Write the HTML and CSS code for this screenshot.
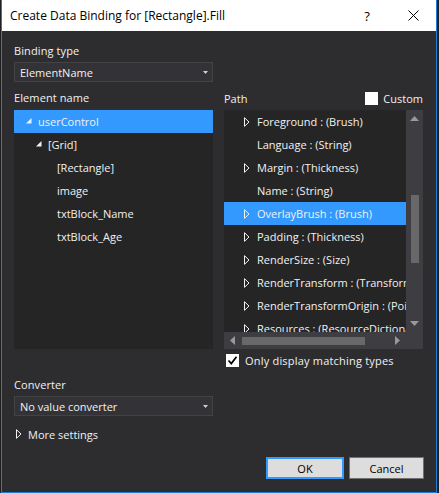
FILE: index.html
```html
<!DOCTYPE html>
<html>
<head>
<meta charset="utf-8">
<link rel="stylesheet" href="styles.css">
</head>
<body>
<div class="window">
  <div class="titlebar">
    <span class="title">Create Data Binding for [Rectangle].Fill</span>
    <span class="tbtn help">?</span>
    <span class="tbtn close"><svg width="11" height="11" viewBox="0 0 11 11"><path d="M0.5 0.5 L10.5 10.5 M10.5 0.5 L0.5 10.5" stroke="#000" stroke-width="1" fill="none"/></svg></span>
  </div>
  <div class="content">
    <div class="grid">
      <div class="label c1">Binding type</div>
      <div class="combo c1">
        <span>ElementName</span>
        <svg class="drop" width="5" height="3" viewBox="0 0 5 3"><path d="M0 0 H5 L2.5 3 Z" fill="#d0d0d0"/></svg>
      </div>
      <div class="label c1 sectlabel">Element name</div>
      <div class="pathhead c2 sectlabel">
        <span>Path</span>
        <span class="custom"><span class="box"></span>Custom</span>
      </div>
      <div class="tree c1">
        <div class="row sel lvl0"><svg class="exp" width="6" height="6" viewBox="0 0 6 6"><path d="M5.5 0 V5.5 H0 Z" fill="#f1f1f1"/></svg>userControl</div>
        <div class="row lvl1"><svg class="exp" width="6" height="6" viewBox="0 0 6 6"><path d="M5.5 0 V5.5 H0 Z" fill="#f1f1f1"/></svg>[Grid]</div>
        <div class="row lvl2">[Rectangle]</div>
        <div class="row lvl2">image</div>
        <div class="row lvl2">txtBlock_Name</div>
        <div class="row lvl2">txtBlock_Age</div>
      </div>
      <div class="pathbox c2">
        <div class="list">
          <div class="prow"><svg class="col" width="6" height="10" viewBox="0 0 6 10"><path d="M0.5 0.7 L5 5 L0.5 9.3 Z" fill="none" stroke="#f1f1f1" stroke-width="1"/></svg>Foreground : (Brush)</div>
          <div class="prow"><span class="nocol"></span>Language : (String)</div>
          <div class="prow"><svg class="col" width="6" height="10" viewBox="0 0 6 10"><path d="M0.5 0.7 L5 5 L0.5 9.3 Z" fill="none" stroke="#f1f1f1" stroke-width="1"/></svg>Margin : (Thickness)</div>
          <div class="prow"><span class="nocol"></span>Name : (String)</div>
          <div class="prow sel"><svg class="col" width="6" height="10" viewBox="0 0 6 10"><path d="M0.5 0.7 L5 5 L0.5 9.3 Z" fill="none" stroke="#f1f1f1" stroke-width="1"/></svg>OverlayBrush : (Brush)</div>
          <div class="prow"><svg class="col" width="6" height="10" viewBox="0 0 6 10"><path d="M0.5 0.7 L5 5 L0.5 9.3 Z" fill="none" stroke="#f1f1f1" stroke-width="1"/></svg>Padding : (Thickness)</div>
          <div class="prow"><svg class="col" width="6" height="10" viewBox="0 0 6 10"><path d="M0.5 0.7 L5 5 L0.5 9.3 Z" fill="none" stroke="#f1f1f1" stroke-width="1"/></svg>RenderSize : (Size)</div>
          <div class="prow"><svg class="col" width="6" height="10" viewBox="0 0 6 10"><path d="M0.5 0.7 L5 5 L0.5 9.3 Z" fill="none" stroke="#f1f1f1" stroke-width="1"/></svg>RenderTransform : (Transform)</div>
          <div class="prow"><svg class="col" width="6" height="10" viewBox="0 0 6 10"><path d="M0.5 0.7 L5 5 L0.5 9.3 Z" fill="none" stroke="#f1f1f1" stroke-width="1"/></svg>RenderTransformOrigin : (Point)</div>
          <div class="prow"><svg class="col" width="6" height="10" viewBox="0 0 6 10"><path d="M0.5 0.7 L5 5 L0.5 9.3 Z" fill="none" stroke="#f1f1f1" stroke-width="1"/></svg>Resources : (ResourceDictionary)</div>
        </div>
        <div class="vscroll">
          <div class="arrowbox"><svg width="9" height="5" viewBox="0 0 9 5"><path d="M4.5 0 L9 5 H0 Z" fill="#999"/></svg></div>
          <div class="vtrack"><div class="vthumb"></div></div>
          <div class="arrowbox"><svg width="9" height="5" viewBox="0 0 9 5"><path d="M0 0 H9 L4.5 5 Z" fill="#999"/></svg></div>
        </div>
        <div class="hscroll">
          <div class="arrowbox"><svg width="5" height="9" viewBox="0 0 5 9"><path d="M5 0 V9 L0 4.5 Z" fill="#999"/></svg></div>
          <div class="htrack"><div class="hthumb"></div></div>
          <div class="arrowbox"><svg width="5" height="9" viewBox="0 0 5 9"><path d="M0 0 L5 4.5 L0 9 Z" fill="#999"/></svg></div>
        </div>
        <div class="corner"></div>
      </div>
      <div class="only c2">
        <span class="box checked"><svg width="11" height="11" viewBox="0 0 11 11"><path d="M1.5 5.5 L4.3 8.5 L9.5 1.8" fill="none" stroke="#000" stroke-width="1.8"/></svg></span>
        <span>Only display matching types</span>
      </div>
    </div>
    <div class="label conv">Converter</div>
    <div class="combo conv-combo">
      <span>No value converter</span>
      <svg class="drop" width="5" height="3" viewBox="0 0 5 3"><path d="M0 0 H5 L2.5 3 Z" fill="#d0d0d0"/></svg>
    </div>
    <div class="more">
      <svg width="6" height="10" viewBox="0 0 6 10"><path d="M0.5 0.7 L5 5 L0.5 9.3 Z" fill="none" stroke="#f1f1f1" stroke-width="1"/></svg>
      <span>More settings</span>
    </div>
    <div class="buttons">
      <button class="btn ok">OK</button>
      <button class="btn cancel">Cancel</button>
    </div>
  </div>
</div>
</body>
</html>
```

FILE: styles.css
```css
* { box-sizing: border-box; }

body {
  margin: 0;
  background: #1f1f21;
  font-family: "Open Sans", "Noto Sans", sans-serif;
  font-size: 11px;
  color: #f1f1f1;
}

.window {
  margin-left: 1px;
  width: 436px;
  height: 493px;
  border: 1px solid #1c7dd6;
  border-top: none;
  background: #2d2d30;
  display: flex;
  flex-direction: column;
  overflow: hidden;
}

.titlebar {
  height: 31px;
  flex: none;
  background: #ffffff;
  color: #000;
  display: flex;
  align-items: center;
  padding-left: 8px;
  font-size: 12px;
}

.title { flex: 1; }

.tbtn {
  width: 46px;
  height: 31px;
  display: flex;
  align-items: center;
  justify-content: center;
}

.help { font-size: 13px; }

.content {
  padding: 12px 12px 0 12px;
  display: flex;
  flex-direction: column;
}

.grid {
  display: grid;
  grid-template-columns: 199px 199px;
  column-gap: 11px;
}

.c1 { grid-column: 1; }
.c2 { grid-column: 2; }

.label {
  height: 16px;
  line-height: 16px;
  letter-spacing: 0.1px;
}

.combo {
  margin-top: 3px;
  width: 199px;
  height: 20px;
  background: #333337;
  border: 1px solid #434346;
  display: flex;
  align-items: center;
  justify-content: space-between;
  padding: 0 4px 0 5px;
}

.sectlabel {
  grid-row: 3;
  margin-top: 8px;
}

.pathhead {
  display: flex;
  align-items: center;
  justify-content: space-between;
  height: 16px;
}

.custom {
  display: flex;
  align-items: center;
  gap: 5px;
}

.box {
  width: 13px;
  height: 13px;
  background: #ffffff;
  display: flex;
  align-items: center;
  justify-content: center;
  flex: none;
}

.tree {
  grid-row: 4;
  margin-top: 4px;
  height: 239px;
  background: #252526;
}

.row {
  height: 23px;
  display: flex;
  align-items: center;
}

.row.sel, .prow.sel { background: #3399ff; }

.lvl0 { padding-left: 12px; }
.lvl1 { padding-left: 22px; }
.lvl2 { padding-left: 43px; }

.exp { margin-right: 6px; margin-top: -1px; }

.pathbox {
  grid-row: 4;
  margin-top: 4px;
  height: 239px;
  background: #252526;
  display: grid;
  grid-template-columns: 182px 17px;
  grid-template-rows: 222px 17px;
}

.list {
  overflow: hidden;
}

.prow {
  height: 23px;
  display: flex;
  align-items: center;
  padding-left: 20px;
  white-space: nowrap;
}

.col { margin-right: 7px; flex: none; }
.nocol { width: 13px; flex: none; }

.vscroll {
  background: #3e3e42;
  display: flex;
  flex-direction: column;
}

.arrowbox {
  width: 17px;
  height: 17px;
  flex: none;
  display: flex;
  align-items: center;
  justify-content: center;
}

.vtrack {
  flex: 1;
  display: flex;
  flex-direction: column;
  align-items: center;
}

.vthumb {
  margin-top: 68px;
  width: 8px;
  height: 68px;
  background: #686868;
}

.hscroll {
  background: #3e3e42;
  display: flex;
}

.htrack {
  flex: 1;
  display: flex;
  align-items: center;
}

.hthumb {
  margin-left: 1px;
  width: 123px;
  height: 8px;
  background: #686868;
}

.corner { background: #3e3e42; }

.only {
  grid-row: 5;
  margin-top: 4px;
  height: 14px;
  display: flex;
  align-items: center;
  gap: 6px;
  padding-left: 2px;
  letter-spacing: 0.2px;
}

.conv { margin-top: 10px; }

.more {
  margin-top: 10px;
  height: 16px;
  display: flex;
  align-items: center;
  gap: 6px;
  padding-left: 2px;
}

.buttons {
  margin-top: 15px;
  display: flex;
  justify-content: flex-end;
  gap: 5px;
}

.btn {
  height: 22px;
  background: #dddddd;
  border: 1px solid #707070;
  font-family: "Open Sans", "Noto Sans", sans-serif;
  font-size: 11px;
  color: #000;
  padding: 0;
}

.ok { width: 78px; border: 2px solid #3399ff; }
.cancel { width: 75px; }
```
